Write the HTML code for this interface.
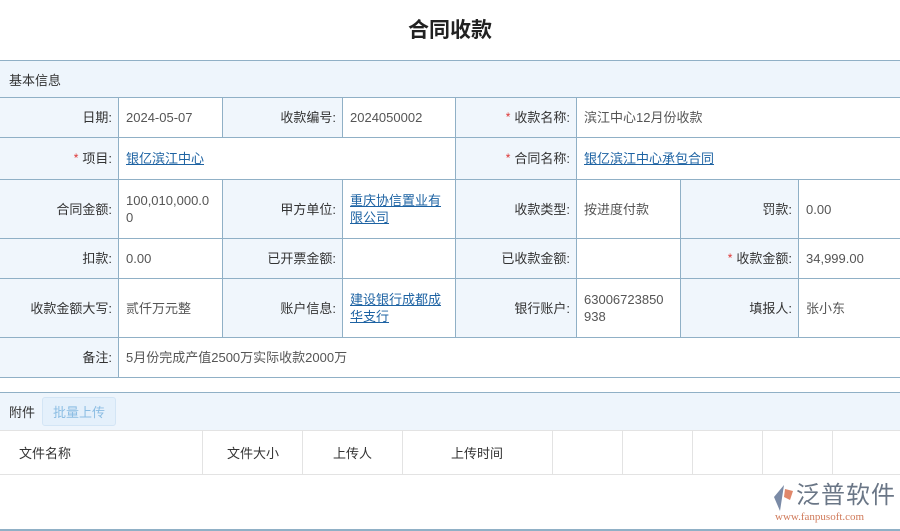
<!DOCTYPE html>
<html><head><meta charset="utf-8"><style>
*{margin:0;padding:0;box-sizing:border-box}
body{width:900px;height:531px;background:#fff;font-family:"Liberation Sans","Noto Sans CJK SC",sans-serif;font-size:13px;color:#333;position:relative;overflow:hidden}
.t{position:absolute;top:14px;left:0;width:900px;text-align:center;font-size:21px;font-weight:bold;color:#222}
.c{position:absolute;border-left:1px solid #90b0c6;border-bottom:1px solid #90b0c6;display:flex;align-items:center;padding:0 7px;line-height:17px}
.f{border-left:none}
.l{background:#f0f6fc;justify-content:flex-end;padding-right:6px}
.v{color:#555;background:#fff}
.s{color:#d33;margin-right:4px;font-size:12px}
a{color:#1e63a3;text-decoration:underline}
</style></head><body>
<div class="t">合同收款</div>
<div style="position:absolute;z-index:2;left:0;top:60px;width:900px;height:38px;background:#eef5fc;border-top:1px solid #90b0c6;border-bottom:1px solid #90b0c6;padding:9px 9px;">基本信息</div>

<div class="c l f" style="left:0;top:97px;width:118px;height:41px">日期:</div>
<div class="c v" style="left:118px;top:97px;width:104px;height:41px">2024-05-07</div>
<div class="c l" style="left:222px;top:97px;width:120px;height:41px">收款编号:</div>
<div class="c v" style="left:342px;top:97px;width:113px;height:41px">2024050002</div>
<div class="c l" style="left:455px;top:97px;width:121px;height:41px"><span class="s">*</span>收款名称:</div>
<div class="c v" style="left:576px;top:97px;width:324px;height:41px">滨江中心12月份收款</div>

<div class="c l f" style="left:0;top:138px;width:118px;height:42px"><span class="s">*</span>项目:</div>
<div class="c v" style="left:118px;top:138px;width:337px;height:42px"><a>银亿滨江中心</a></div>
<div class="c l" style="left:455px;top:138px;width:121px;height:42px"><span class="s">*</span>合同名称:</div>
<div class="c v" style="left:576px;top:138px;width:324px;height:42px"><a>银亿滨江中心承包合同</a></div>

<div class="c l f" style="left:0;top:180px;width:118px;height:59px">合同金额:</div>
<div class="c v" style="left:118px;top:180px;width:104px;height:59px">100,010,000.0<br>0</div>
<div class="c l" style="left:222px;top:180px;width:120px;height:59px">甲方单位:</div>
<div class="c v" style="left:342px;top:180px;width:113px;height:59px"><a>重庆协信置业有限公司</a></div>
<div class="c l" style="left:455px;top:180px;width:121px;height:59px">收款类型:</div>
<div class="c v" style="left:576px;top:180px;width:104px;height:59px">按进度付款</div>
<div class="c l" style="left:680px;top:180px;width:118px;height:59px">罚款:</div>
<div class="c v" style="left:798px;top:180px;width:102px;height:59px">0.00</div>

<div class="c l f" style="left:0;top:239px;width:118px;height:40px">扣款:</div>
<div class="c v" style="left:118px;top:239px;width:104px;height:40px">0.00</div>
<div class="c l" style="left:222px;top:239px;width:120px;height:40px">已开票金额:</div>
<div class="c v" style="left:342px;top:239px;width:113px;height:40px"></div>
<div class="c l" style="left:455px;top:239px;width:121px;height:40px">已收款金额:</div>
<div class="c v" style="left:576px;top:239px;width:104px;height:40px"></div>
<div class="c l" style="left:680px;top:239px;width:118px;height:40px"><span class="s">*</span>收款金额:</div>
<div class="c v" style="left:798px;top:239px;width:102px;height:40px">34,999.00</div>

<div class="c l f" style="left:0;top:279px;width:118px;height:59px">收款金额大写:</div>
<div class="c v" style="left:118px;top:279px;width:104px;height:59px">贰仟万元整</div>
<div class="c l" style="left:222px;top:279px;width:120px;height:59px">账户信息:</div>
<div class="c v" style="left:342px;top:279px;width:113px;height:59px"><a>建设银行成都成华支行</a></div>
<div class="c l" style="left:455px;top:279px;width:121px;height:59px">银行账户:</div>
<div class="c v" style="left:576px;top:279px;width:104px;height:59px">63006723850<br>938</div>
<div class="c l" style="left:680px;top:279px;width:118px;height:59px">填报人:</div>
<div class="c v" style="left:798px;top:279px;width:102px;height:59px">张小东</div>

<div class="c l f" style="left:0;top:338px;width:118px;height:40px">备注:</div>
<div class="c v" style="left:118px;top:338px;width:782px;height:40px">5月份完成产值2500万实际收款2000万</div>

<div style="position:absolute;left:0;top:392px;width:900px;height:38px;background:#eef5fc;border-top:1px solid #90b0c6;display:flex;align-items:center;padding-left:9px">附件<span style="margin-left:7px;border:1px solid #d3e5f5;background:#e4f0fb;color:#8bbde3;border-radius:3px;padding:4px 10px">批量上传</span></div>
<div style="position:absolute;left:0;top:430px;width:900px;height:45px;border-top:1px solid #e3e3e3;border-bottom:1px solid #e3e3e3;display:flex">
<div style="width:203px;border-right:1px solid #e3e3e3;padding:12px 19px">文件名称</div>
<div style="width:100px;border-right:1px solid #e3e3e3;padding:12px 0 0 24px">文件大小</div>
<div style="width:100px;border-right:1px solid #e3e3e3;padding:12px 0 0 30px">上传人</div>
<div style="width:150px;border-right:1px solid #e3e3e3;padding:12px 0 0 48px">上传时间</div>
<div style="width:70px;border-right:1px solid #e3e3e3"></div>
<div style="width:70px;border-right:1px solid #e3e3e3"></div>
<div style="width:70px;border-right:1px solid #e3e3e3"></div>
<div style="width:70px;border-right:1px solid #e3e3e3"></div>
</div>
<div style="position:absolute;left:771px;top:484px;width:24px;height:28px">
<svg width="24" height="28"><path d="M13 1 L3 13 L9 27 L11 14 Z" fill="#7a8aa6"/><path d="M14 5 L22 7 L19 16 L13 13 Z" fill="#e0876a"/></svg></div>
<div style="position:absolute;left:796px;top:482px;font-size:24px;color:#6a7686;letter-spacing:1px;line-height:28px">泛普软件</div>
<div style="position:absolute;left:775px;top:511px;font-family:'Liberation Serif',serif;font-size:11px;color:#d07a5a;line-height:12px">www.fanpusoft.com</div>
<div style="position:absolute;left:0;top:529px;width:900px;height:2px;background:#90b0c6"></div>
</body></html>
